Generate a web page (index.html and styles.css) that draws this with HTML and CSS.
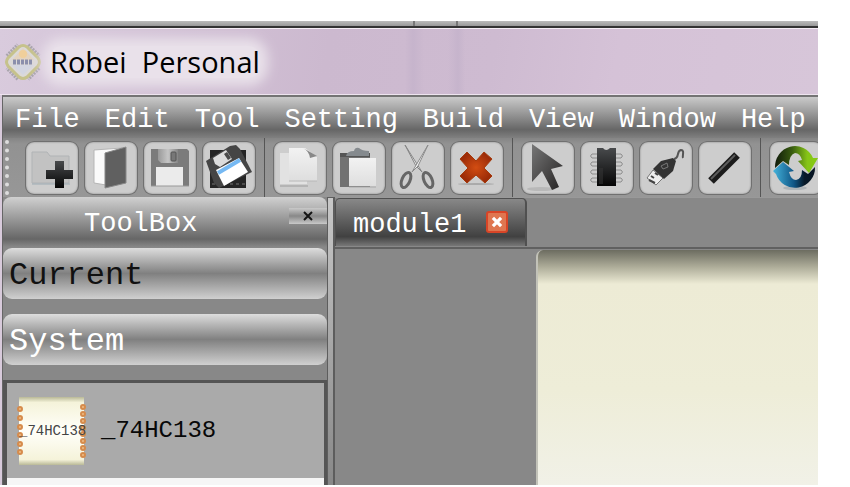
FILE: index.html
```html
<!DOCTYPE html>
<html lang="en">
<head>
<meta charset="utf-8">
<title>Robei Personal</title>
<link rel="stylesheet" href="styles.css">
</head>
<body>
<div class="window">
  <div class="backdrop"></div>
  <header class="titlebar">
    <svg class="logo" viewBox="0 0 38 38" aria-hidden="true">
      <g fill="none" stroke="#aaa6ad" stroke-width="4" stroke-dasharray="2 1"><path d="M3 13L14 2M24 2L35 13M35 25L24 36M14 36L3 25"/></g>
      <path d="M15 4Q19 1 23 4L34 15Q37 19 34 23L23 34Q19 37 15 34L4 23Q1 19 4 15Z" fill="#dcd9d8" stroke="#c6c28c" stroke-width="3"/>
      <path d="M19 5L30 17H8Z" fill="#e3d3c0"/>
      <circle cx="19" cy="11" r="4" fill="#f0cf9b"/>
      <path d="M8 22H30L19 32Z" fill="#d3d6e2"/>
      <path d="M9 19H29" stroke="#8b8fac" stroke-width="5" stroke-dasharray="3 1"/>
    </svg>
    <h1 class="app-title">Robei&nbsp; Personal</h1>
  </header>
  <div class="frame">
    <nav class="menubar">
      <button>File</button><button>Edit</button><button>Tool</button><button>Setting</button><button>Build</button><button>View</button><button>Window</button><button>Help</button>
    </nav>
    <div class="toolbar">
      <span class="grip"></span>
      <button class="tool" aria-label="New"><svg viewBox="0 0 54 54">
        <path d="M7 42V11H22L25 15H44V42Z" fill="#c2c2c2" stroke="#b0b3b5"/><path d="M7 43H45" stroke="#9eacb4" stroke-width="1"/>
        <path d="M30 20H39V29H48V38H39V47H30V38H21V29H30Z" fill="url(#ink)"/></svg></button>
      <button class="tool" aria-label="Open"><svg viewBox="0 0 54 54">
        <path d="M10 9L38 7V38L22 44L10 42Z" fill="#fafafa" stroke="#b5b5b5"/><path d="M21 12L42 6V42L21 47Z" fill="#606060" stroke="#888"/></svg></button>
      <button class="tool" aria-label="Save"><svg viewBox="0 0 54 54">
        <path d="M8 8H44L46 10V45H8Z" fill="#7b7b7b"/><path d="M15 8H35V22H18L15 19Z" fill="url(#metal)"/><rect x="28" y="11" width="5" height="9" rx="1" fill="#777" stroke="#555"/><path d="M13 26H40V45H13Z" fill="#ebebeb"/><path d="M8 45H46" stroke="#999"/></svg></button>
      <button class="tool" aria-label="Save all"><svg viewBox="0 0 54 54">
        <path d="M8 9H44V47H8Z" fill="#252525"/><path d="M10 43H44" stroke="#777" stroke-dasharray="3 3"/>
        <path d="M4 20L28 5L34 4L38 8L50 31L17 47L12 42Z" fill="#454545"/><path d="M11 17L24 9L30 18L18 26L13 23Z" fill="#dcdcdc"/><path d="M22 13L25 11L29 17L26 19Z" fill="#4a4a4a"/>
        <path d="M14 29L37 17L46 31L22 45Z" fill="#fff"/><path d="M16 32L38 19" stroke="#76b9f3" stroke-width="4"/></svg></button>
      <span class="separator"></span>
      <button class="tool" aria-label="Copy"><svg viewBox="0 0 54 54">
        <path d="M7 12H34V43H7Z" fill="#e2e2e2"/><path d="M7 45H35" stroke="#b4b4b4" stroke-width="2"/><path d="M16 7H32L44 16V40H16Z" fill="url(#paper)"/><path d="M16 40H44" stroke="#b8b8b8"/><path d="M30 7Q36 10 37 17L44 15Z" fill="#888"/></svg></button>
      <button class="tool" aria-label="Paste"><svg viewBox="0 0 54 54">
        <path d="M8 12H38V46H8Z" fill="#727272"/><path d="M8 12H38V16H8Z" fill="#555"/><path d="M14 15Q15 10 22 10Q23 6 27 7Q30 10 37 10V15Z" fill="#858a8e"/><path d="M17 17H44V45H17Z" fill="url(#paper)"/><path d="M17 46H44" stroke="#aaa"/></svg></button>
      <button class="tool" aria-label="Cut"><svg viewBox="0 0 54 54">
        <path d="M14 4L31 31L25 25Z" fill="#eee" stroke="#858585"/><path d="M37 4L21 31L27 25Z" fill="#f4f4f4" stroke="#8b8b8b"/>
        <g fill="none" stroke="#666" stroke-width="3"><ellipse cx="15" cy="39" rx="4" ry="8" transform="rotate(24 15 39)"/><ellipse cx="37" cy="39" rx="4" ry="8" transform="rotate(-24 37 39)"/></g></svg></button>
      <button class="tool" aria-label="Delete"><svg viewBox="0 0 54 54">
        <ellipse cx="26" cy="43" rx="18" ry="1" fill="#aaa"/><path d="M17 11L26 20L34 11L42 18L34 27L42 35L35 42L26 34L17 42L10 35L18 27L10 18Z" fill="url(#red)" stroke="#a53a0b" stroke-linejoin="round"/></svg></button>
      <span class="separator"></span>
      <button class="tool" aria-label="Select"><svg viewBox="0 0 54 54">
        <ellipse cx="20" cy="48" rx="14" ry="2" fill="#b8b8b8"/><path d="M11 3L42 25L30 28L38 46L31 49L21 30L11 41Z" fill="url(#pointer)"/></svg></button>
      <button class="tool" aria-label="Module"><svg viewBox="0 0 54 54">
        <g fill="none" stroke="#8c8c8c" stroke-width="1"><path d="M17 13H12Q9 15 12 17H17M17 21H12Q9 23 12 25H17M17 29H12Q9 31 12 33H17M17 37H12Q9 39 12 41H17M36 13H41Q44 15 41 17H36M36 21H41Q44 23 41 25H36M36 29H41Q44 31 41 33H36M36 37H41Q44 39 41 41H36"/></g>
        <path d="M17 7H23Q26 11 30 7H36V45H17Z" fill="url(#ink)"/><path d="M20 27V43M22 27V43" stroke="#383838"/></svg></button>
      <button class="tool" aria-label="Port"><svg viewBox="0 0 54 54">
        <path d="M35 18C41 17 37 10 42 9C46 9 43 15 44 17" fill="none" stroke="#555" stroke-width="2"/><path d="M8 37L14 29L24 37L17 44Z" fill="#eee" stroke="#777"/><path d="M12 35L15 37M16 32L19 34M10 39L16 42" stroke="#444" stroke-width="2"/><path d="M14 28L22 20L34 17L37 20L34 30L25 38Z" fill="#333"/><path d="M22 25L28 22L29 26L24 28Z" fill="none" stroke="#777"/></svg></button>
      <button class="tool" aria-label="Wire"><svg viewBox="0 0 54 54">
        <path d="M13 40L39 14" stroke="#1b1b1b" stroke-width="8"/><path d="M13 38L37 14" stroke="#5c5c5c" stroke-width="2"/></svg></button>
      <span class="separator"></span>
      <button class="tool" aria-label="Refresh"><svg viewBox="0 0 54 54">
        <ellipse cx="26" cy="47" rx="12" ry="2" fill="#aeb4b8"/>
        <path d="M46 26A20 20 0 0 1 7 33L4 30L14 21L25 30L20 31Q22 39 27 39Q33 38 33 29L39 33Z" fill="url(#blue)"/>
        <path d="M6 27A20 21 0 0 1 44 17L49 17L40 32L29 20L33 19Q31 12 26 12Q20 14 20 24L14 20Z" fill="url(#green)"/></svg></button>
    </div>
    <main class="workspace">
      <aside class="dock">
        <div class="dock-title"><h2>ToolBox</h2><button class="dock-close" aria-label="Close toolbox"><svg viewBox="0 0 12 12"><path d="M2 2L10 10M10 2L2 10" stroke="#151515" stroke-width="2"/></svg></button></div>
        <button class="section current">Current</button>
        <button class="section">System</button>
        <div class="modules">
          <button class="module"><span class="thumb"><svg class="pins" viewBox="0 0 70 68" aria-hidden="true"><g fill="#edbd87" stroke="#d68b4b" stroke-width="2"><circle cx="3" cy="12" r="2"/><circle cx="3" cy="21" r="2"/><circle cx="3" cy="30" r="2"/><circle cx="3" cy="38" r="2"/><circle cx="3" cy="47" r="2"/><circle cx="3" cy="55" r="2"/><circle cx="66" cy="10" r="2"/><circle cx="66" cy="17" r="2"/><circle cx="66" cy="24" r="2"/><circle cx="66" cy="31" r="2"/><circle cx="66" cy="37" r="2"/><circle cx="66" cy="44" r="2"/><circle cx="66" cy="51" r="2"/><circle cx="66" cy="58" r="2"/></g></svg><span class="thumb-name">_74HC138</span></span><span>_74HC138</span></button>
        </div>
      </aside>
      <div class="splitter"></div>
      <section class="editor">
        <div class="tabs"><div class="tab"><span>module1</span><button class="tab-close" aria-label="Close module1"><svg viewBox="0 0 22 22"><path d="M6 6L16 16M16 6L6 16" stroke="#fff" stroke-width="4"/></svg></button></div></div>
        <div class="canvas"><div class="sheet"></div></div>
      </section>
    </main>
  </div>
</div>
<svg class="defs" aria-hidden="true"><defs>
  <linearGradient id="ink" x2="0" y2="1"><stop stop-color="#484a4c"/><stop offset="1" stop-color="#050505"/></linearGradient>
  <linearGradient id="metal"><stop stop-color="#999"/><stop offset=".5" stop-color="#c5c5c5"/><stop offset="1" stop-color="#858585"/></linearGradient>
  <linearGradient id="paper" x2="0" y2="1"><stop stop-color="#f2f2f2"/><stop offset="1" stop-color="#dedede"/></linearGradient>
  <radialGradient id="red"><stop stop-color="#d34d12"/><stop offset="1" stop-color="#9c2c08"/></radialGradient>
  <linearGradient id="pointer" x2="1" y2="1"><stop stop-color="#777"/><stop offset="1" stop-color="#242222"/></linearGradient>
  <linearGradient id="green"><stop stop-color="#101a0a"/><stop offset=".4" stop-color="#395c10"/><stop offset=".75" stop-color="#86c418"/><stop offset="1" stop-color="#86cc10"/></linearGradient>
  <linearGradient id="blue"><stop stop-color="#45b4dc"/><stop offset=".5" stop-color="#0f5585"/><stop offset=".75" stop-color="#081a2a"/><stop offset="1" stop-color="#081522"/></linearGradient>
</defs></svg>
</body>
</html>
```
FILE: styles.css
```css
* { box-sizing: border-box; }
body {
  margin: 0;
  padding: 21px 32px 2px 0;
  height: 100vh;
  background: #fff;
  font-family: "Liberation Mono", monospace;
  font-size: 27px;
  overflow: hidden;
}
button {
  margin: 0;
  padding: 0;
  border: 0;
  background: none;
  font: inherit;
  color: inherit;
}
h1, h2 { margin: 0; font-weight: 400; }
svg { display: block; }
.defs { position: absolute; width: 0; height: 0; }
.window { display: flex; flex-direction: column; height: 100%; overflow: hidden; }
.backdrop {
  flex: none;
  height: 7px;
  border-bottom: 2px solid #333;
  background:
    linear-gradient(#777, #777) 413px 0 / 2px 100% no-repeat,
    linear-gradient(#777, #777) 456px 0 / 2px 100% no-repeat,
    linear-gradient(#bbb, #999);
}
.titlebar {
  flex: none;
  display: flex;
  align-items: center;
  gap: 8px;
  height: 67px;
  padding-left: 4px;
  border-top: 1px solid #f5edf5;
  border-bottom: 1px solid #eee4ef;
  background:
    linear-gradient(90deg, #c6b4cc00 405px, #c6b4cc 413px, #c6b4cc00 424px, #c6b4cc00 448px, #c6b4cc 458px, #c6b4cc00 465px),
    linear-gradient(100deg, #d9cbdd, #ccb9cf 40%, #cebbd1 60%, #d5c2d7 75%, #d7c6d9);
  overflow: hidden;
}
.logo { width: 38px; height: 38px; }
.app-title {
  font: 400 29px/32px "Open Sans", "Noto Sans", sans-serif;
  color: #000;
  background: #e9e1ea;
  border-radius: 12px;
  box-shadow: 0 0 12px 8px #e9e1ea;
}
.frame {
  flex: 1;
  min-height: 0;
  display: flex;
  flex-direction: column;
  margin-left: 2px;
  border-top: 2px solid #747474;
  border-left: 1px solid #666;
  background: #888;
  box-shadow: -2px 0 #d8cadb;
}
.menubar {
  flex: none;
  display: flex;
  align-items: center;
  gap: 25px;
  height: 41px;
  padding: 4px 0 0 12px;
  color: #fff;
  line-height: 32px;
  background: linear-gradient(#cacaca, #666 80%, #808080);
}
.toolbar {
  flex: none;
  display: flex;
  align-items: center;
  gap: 5px;
  height: 59px;
  background: linear-gradient(#858585, #929292 10%, #979797);
  overflow: hidden;
}
.grip {
  flex: none;
  width: 4px;
  height: 55px;
  margin: 0 11px 0 2px;
  border-left: 4px dotted #ddd;
}
.tool {
  flex: none;
  width: 54px;
  height: 54px;
  border-radius: 9px;
  background: #cdcdcd;
  box-shadow: inset 0 0 0 1px #707070, inset 0 0 2px 1px #777;
}
.tool svg { width: 54px; height: 54px; }
.separator {
  flex: none;
  align-self: stretch;
  width: 1px;
  margin: 0 3px;
  background: #555;
}
.workspace { flex: 1; min-height: 0; display: flex; }
.dock { flex: none; width: 324px; display: flex; flex-direction: column; }
.dock-title {
  flex: none;
  display: flex;
  align-items: center;
  justify-content: space-between;
  height: 50px;
  margin-bottom: 1px;
  padding-left: 81px;
  border-radius: 8px 8px 0 0;
  color: #fff;
  background: linear-gradient(#d0d0d0, #666 84%, #888);
}
.dock-title h2 { padding-top: 4px; font-size: 27px; line-height: 32px; }
.dock-close {
  display: flex;
  align-items: center;
  justify-content: center;
  width: 38px;
  height: 16px;
  margin-bottom: 12px;
  background: linear-gradient(#c9c9c9, #888 50%, #c9c9c9);
}
.dock-close svg { width: 12px; height: 12px; }
.section {
  flex: none;
  height: 51px;
  margin-bottom: 15px;
  padding: 4px 6px 0;
  border-radius: 9px;
  text-align: left;
  font-size: 32px;
  line-height: 40px;
  color: #fff;
  background: linear-gradient(#ddd, #808080 50%, #d0d0d0);
}
.current { color: #111; }
.modules {
  flex: 1;
  min-height: 0;
  border: solid #555;
  border-width: 3px 3px 0 4px;
  background: #f6f6f6;
  overflow: hidden;
}
.module {
  display: flex;
  align-items: center;
  gap: 14px;
  width: 100%;
  height: 95px;
  padding-left: 10px;
  background: #aaa;
  color: #080808;
  font-size: 24px;
}
.thumb {
  position: relative;
  display: flex;
  align-items: center;
  width: 70px;
  height: 68px;
  padding: 0 2px;
  overflow: hidden;
  color: #444;
  font-size: 14px;
  background: linear-gradient(#b9b997, #f5f3da 8%, #fffffa 50%, #f5f3da 92%, #b9b997) 2px 0 / 65px 100% no-repeat;
}
.pins { position: absolute; inset: 0; width: 70px; height: 68px; }
.thumb-name { position: relative; }
.splitter {
  flex: none;
  width: 8px;
  border: solid #5d5d5d;
  border-width: 1px 2px 0 1px;
  background: linear-gradient(#c8c8c8, #888);
}
.editor { flex: 1; min-width: 0; display: flex; flex-direction: column; }
.tabs { flex: none; height: 52px; border-bottom: 2px solid #606060; border-top: 1px solid #999; }
.tab {
  display: flex;
  align-items: center;
  justify-content: space-between;
  width: 192px;
  height: 48px;
  padding: 4px 17px 0;
  border: solid #505050;
  border-width: 1px 2px 0 1px;
  border-radius: 5px 5px 0 0;
  color: #fff;
  background: linear-gradient(#888, #414141 80%, #777);
}
.tab-close {
  width: 22px;
  height: 22px;
  margin-bottom: 6px;
  border: 2px solid #d84527;
  border-radius: 3px;
  background: #df7650;
}
.tab-close svg { width: 18px; height: 18px; }
.canvas { flex: 1; min-height: 0; padding: 1px 0 0 201px; }
.sheet {
  height: 100%;
  border-left: 2px solid #c2c2b8;
  border-radius: 7px 0 0 0;
  background: linear-gradient(#6c6c60, #aaa996 16px, #edebd5 34px, #eeedd8 140px, #f1f1e7);
}
```
